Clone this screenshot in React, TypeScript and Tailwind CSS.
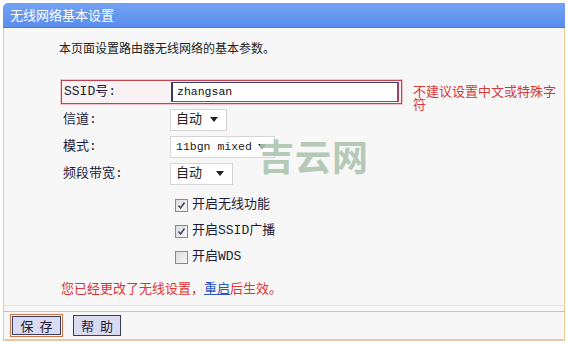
const font = "font-['Liberation_Mono','Noto_Sans_CJK_SC',monospace]";
const cjk = "font-['Noto_Sans_CJK_SC','Noto_Sans',sans-serif]";

function Select({ label, width, small }: { label: string; width: string; small?: boolean }) {
  return (
    <div
      className={`flex items-center justify-between h-[22px] ${width} bg-white border border-[#d6d6d6] pl-[5px] pr-[8px] text-[#222] whitespace-nowrap`}
    >
      <span className={small ? "text-[11.5px]" : "text-[13px]"}>{label}</span>
      <svg width="8" height="5" viewBox="0 0 8 5">
        <path d="M0 0 L8 0 L4 5 Z" fill="#222" />
      </svg>
    </div>
  );
}

function Check({ checked, label }: { checked: boolean; label: string }) {
  return (
    <div className="flex items-center h-[26px] pl-[171px]">
      <div className="w-[13px] h-[13px] border border-[#8a8a8a] bg-gradient-to-br from-[#dcdcdc] to-[#f8f8f8] flex items-center justify-center">
        {checked && (
          <svg width="9" height="9" viewBox="0 0 9 9">
            <path d="M1.5 4.5 L3.6 7 L7.5 1.5" stroke="#3d4a66" strokeWidth="1.6" fill="none" />
          </svg>
        )}
      </div>
      <span className="ml-[4px] text-[13px] text-[#1c1c3a]">{label}</span>
    </div>
  );
}

function Btn({ a, b, className }: { a: string; b: string; className: string }) {
  return (
    <button
      className={`flex items-center justify-center gap-[6px] bg-[#dadaf0] border border-[#3c3c5c] text-[13px] text-[#1c1c3a] ${cjk} ${className}`}
    >
      <span>{a}</span>
      <span>{b}</span>
    </button>
  );
}

export default function App() {
  return (
    <div className={`relative w-[569px] h-[343px] bg-white overflow-hidden ${font}`}>
      <div className="ml-[3px] mr-[4px] mt-[3px] flex flex-col">
        <div className="h-[25px] rounded-tl-[5px] bg-gradient-to-b from-[#73a3f3] to-[#5a8ded] border-b border-[#4b7bd6] flex items-center pl-[7px]">
          <span className={`text-[13px] text-white ${cjk}`}>无线网络基本设置</span>
        </div>

        <div className="h-[277px] bg-[#f7f7f7] border-l border-r border-[#efc88e] flex flex-col">
          <div className={`mt-[12px] pl-[55px] h-[16px] leading-[16px] text-[12px] text-[#222] ${cjk}`}>
            本页面设置路由器无线网络的基本参数。
          </div>

          <div className="mt-[24px] h-[24px] flex items-start">
            <div className="ml-[57px] w-[341px] h-[24px] border border-[#c3404e] ring-1 ring-[#f4c4c8] bg-[#f8f2f2] flex items-center">
              <span className="pl-[2px] w-[109px] text-[13px] text-[#1c1c3a]">SSID号:</span>
              <div className="h-[20px] w-[228px] bg-white border-t border-l-2 border-b border-r-2 border-t-[#3a3a6a] border-l-[#3a3a6a] border-b-[#a04060] border-r-[#a04060] flex items-center pl-[4px] text-[11.5px] text-[#111]">
                zhangsan
              </div>
            </div>
            <div className="ml-[11px] mt-[6px] w-[150px] text-[13px] leading-[13px] text-[#d03a3a]">
              不建议设置中文或特殊字符
            </div>
          </div>

          <div className="pl-[59px] text-[13px] text-[#1c1c3a]">
            <div className="flex items-center h-[27px] mt-[2px]">
              <span className="w-[107px]">信道:</span>
              <Select label="自动" width="w-[57px]" />
            </div>
            <div className="flex items-center h-[27px]">
              <span className="w-[107px]">模式:</span>
              <Select label="11bgn mixed" width="w-[105px]" small />
            </div>
            <div className="flex items-center h-[27px]">
              <span className="w-[107px]">频段带宽:</span>
              <Select label="自动" width="w-[63px]" />
            </div>
          </div>

          <div className="mt-[5px] flex flex-col">
            <Check checked label="开启无线功能" />
            <Check checked label="开启SSID广播" />
            <Check checked={false} label="开启WDS" />
          </div>

          <div className={`mt-[8px] pl-[57px] text-[13px] text-[#e03434] ${cjk}`}>
            您已经更改了无线设置，<span className="text-[#2a55c0] underline">重启</span>后生效。
          </div>
        </div>

        <div className="h-px bg-[#ece3c8]" />
        <div className="h-[5px] bg-[#f7f7f7] border-l border-r border-[#efc88e]" />
        <div className="h-px bg-[#d5c392]" />

        <div className="h-[27px] bg-[#f7f7f7] border-l border-r border-[#efc88e] flex items-center pl-[6px] gap-[10px]">
          <div className="border border-[#cc7448] p-px">
            <Btn a="保" b="存" className="h-[19px] w-[49px]" />
          </div>
          <Btn a="帮" b="助" className="h-[21px] w-[48px]" />
        </div>
        <div className="h-[2px] bg-[#eec6a6]" />
      </div>

      <div
        className={`absolute left-[258px] top-[128px] text-[36px] font-bold text-[#aec6b0] opacity-90 tracking-[1px] pointer-events-none ${cjk}`}
      >
        吉云网
      </div>
    </div>
  );
}
